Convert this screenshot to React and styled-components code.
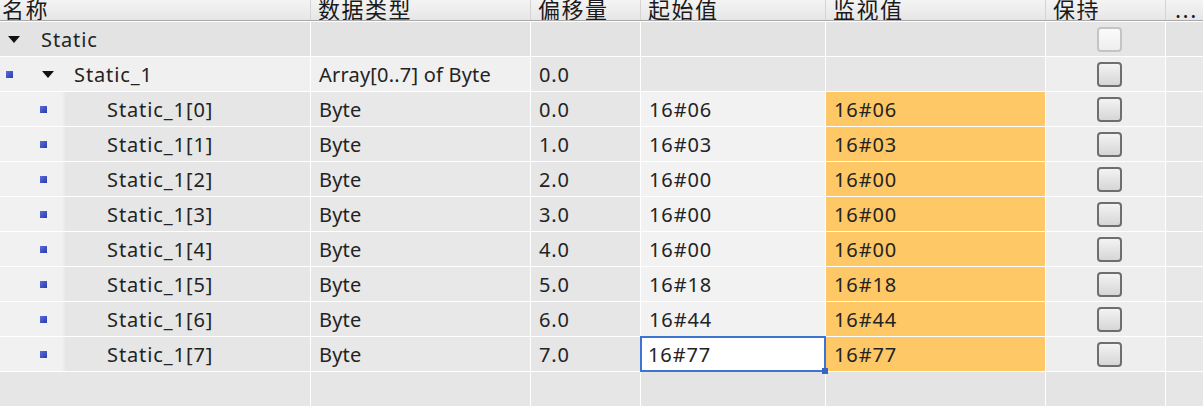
import React from "react";
import styled, { createGlobalStyle, css } from "styled-components";

const Global = createGlobalStyle`
  html, body { margin: 0; padding: 0; background: #ffffff; }
  body { font-family: "Noto Sans", "Noto Sans CJK SC", sans-serif; }
`;

const COLS = "310px 219px 109px 184px 219px 119px 1fr";

const Table = styled.div`
  width: 1203px;
  height: 407px;
  overflow: hidden;
  background: #ffffff;
  display: flex;
  flex-direction: column;
`;

const HeaderRow = styled.div`
  display: grid;
  grid-template-columns: ${COLS};
  column-gap: 1px;
  height: 20px;
  background: #d4d4d4;
  border-bottom: 1px solid #a9a9a9;
`;

const HeadCell = styled.div`
  height: 20px;
  overflow: hidden;
  display: flex;
  align-items: flex-end;
  padding-left: ${(p) => p.$pl || 7}px;
  background: linear-gradient(to bottom, #f4f4f4, #e6e6e6);
  font-family: "Noto Sans CJK SC", "Noto Sans", sans-serif;
  font-size: 22px;
  line-height: 22px;
  letter-spacing: 1.5px;
  color: #1a1a1a;
  padding-bottom: 1px;
  box-sizing: border-box;
`;

const Body = styled.div`
  display: grid;
  grid-template-columns: ${COLS};
  grid-auto-rows: 34px;
  gap: 1px;
  padding-top: 1px;
`;

const Cell = styled.div`
  position: relative;
  display: flex;
  align-items: center;
  box-sizing: border-box;
  padding-left: ${(p) => p.$pl ?? 8}px;
  padding-top: 1px;
  font-size: 20px;
  letter-spacing: ${(p) => p.$ls ?? 0.9}px;
  color: #232323;
  white-space: nowrap;
  background: ${(p) => p.$bg || "#e6e6e6"};
  ${(p) =>
    p.$split &&
    css`
      background: linear-gradient(to right, #f1f1f1 0, #f1f1f1 62px, #e6e6e6 66px);
    `}
  ${(p) =>
    p.$editing &&
    css`
      background: #ffffff;
      border: 2px solid #3d74d3;
      padding-left: 6px;
      margin: -1px -1px -1px -1px;
      z-index: 1;
    `}
`;

const Handle = styled.span`
  position: absolute;
  right: -4px;
  bottom: -4px;
  width: 6px;
  height: 6px;
  background: #3466c8;
`;

const Tri = styled.span`
  display: inline-block;
  width: 0;
  height: 0;
  border-left: 6px solid transparent;
  border-right: 6px solid transparent;
  border-top: 7px solid #111111;
  margin-right: ${(p) => p.$mr || 20}px;
`;

const Square = styled.span`
  display: inline-block;
  width: 7px;
  height: 7px;
  background: linear-gradient(135deg, #5a6ee0, #2b3aa8);
  margin-right: ${(p) => p.$mr || 0}px;
`;

const Check = styled.span`
  display: block;
  width: 25px;
  height: 25px;
  box-sizing: border-box;
  border-radius: 4px;
  margin-left: 51px;
  margin-top: -1px;
  border: 2px solid ${(p) => (p.$faint ? "#c4c4c4" : "#6e6e6e")};
  background: ${(p) =>
    p.$faint
      ? "linear-gradient(to bottom, #fbfbfb, #eeeeee)"
      : "linear-gradient(to bottom, #f3f3f3, #d6d6d6)"};
`;

const elements = [
  ["06", "0.0"],
  ["03", "1.0"],
  ["00", "2.0"],
  ["00", "3.0"],
  ["00", "4.0"],
  ["18", "5.0"],
  ["44", "6.0"],
  ["77", "7.0"],
];

export default function App() {
  return (
    <>
      <Global />
      <Table>
        <HeaderRow>
          <HeadCell $pl={2}>名称</HeadCell>
          <HeadCell>数据类型</HeadCell>
          <HeadCell>偏移量</HeadCell>
          <HeadCell>起始值</HeadCell>
          <HeadCell>监视值</HeadCell>
          <HeadCell>保持</HeadCell>
          <HeadCell $pl={9}>...</HeadCell>
        </HeaderRow>
        <Body>
          <Cell $bg="#e3e3e3" $pl={8}>
            <Tri $mr={21} />
            Static
          </Cell>
          <Cell $bg="#e3e3e3" />
          <Cell $bg="#e3e3e3" />
          <Cell $bg="#e3e3e3" />
          <Cell $bg="#e3e3e3" />
          <Cell $bg="#e6e6e6" $pl={0}>
            <Check $faint />
          </Cell>
          <Cell $bg="#e3e3e3" />

          <Cell $bg="#f0f0f0" $pl={6}>
            <Square $mr={29} />
            <Tri $mr={20} />
            Static_1
          </Cell>
          <Cell $bg="#f0f0f0" $ls={0.2}>Array[0..7] of Byte</Cell>
          <Cell $bg="#e6e6e6">0.0</Cell>
          <Cell $bg="#e6e6e6" />
          <Cell $bg="#e6e6e6" />
          <Cell $bg="#eeeeee" $pl={0}>
            <Check />
          </Cell>
          <Cell $bg="#e8e8e8" />

          {elements.map(([v, off], i) => {
            const last = i === elements.length - 1;
            return (
              <React.Fragment key={i}>
                <Cell $split $pl={40}>
                  <Square $mr={60} />
                  Static_1[{i}]
                </Cell>
                <Cell $bg="#e8e8e8" $ls={0.2}>Byte</Cell>
                <Cell $bg="#e6e6e6">{off}</Cell>
                {last ? (
                  <Cell $editing>
                    16#{v}
                    <Handle />
                  </Cell>
                ) : (
                  <Cell $bg="#f2f2f2">16#{v}</Cell>
                )}
                <Cell $bg="#fdc865">16#{v}</Cell>
                <Cell $bg="#eeeeee" $pl={0}>
                  <Check />
                </Cell>
                <Cell $bg="#e8e8e8" />
              </React.Fragment>
            );
          })}

          <Cell $bg="#e6e6e6" />
          <Cell $bg="#e6e6e6" />
          <Cell $bg="#e6e6e6" />
          <Cell $bg="#e4e4e4" />
          <Cell $bg="#e4e4e4" />
          <Cell $bg="#e4e4e4" />
          <Cell $bg="#e6e6e6" />
        </Body>
      </Table>
    </>
  );
}
